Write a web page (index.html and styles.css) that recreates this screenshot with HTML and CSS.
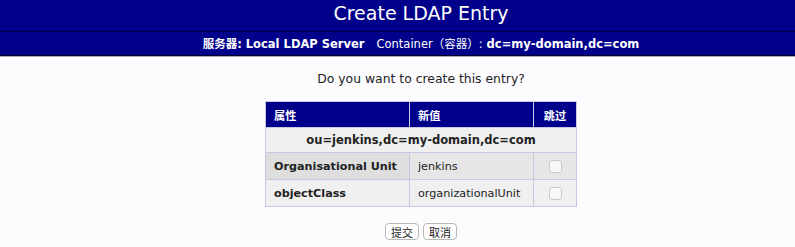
FILE: index.html
```html
<!DOCTYPE html>
<html lang="zh">

<head>
    <meta charset="UTF-8">
    <title>Create LDAP Entry</title>
    <link rel="stylesheet" href="styles.css">
</head>

<body>
    <h1 class="title">Create LDAP Entry</h1>
    <h2 class="subtitle">服务器: <b>Local LDAP Server</b>&nbsp;&nbsp;&nbsp;<span class="plain">Container（容器）:</span> <b>dc=my-domain,dc=com</b></h2>

    <div class="content">
        <p class="question">Do you want to create this entry?</p>

        <table class="confirm">
            <tr class="head">
                <th class="c-attr">属性</th>
                <th class="c-val">新值</th>
                <th class="c-skip">跳过</th>
            </tr>
            <tr class="dn">
                <td colspan="3">ou=jenkins,dc=my-domain,dc=com</td>
            </tr>
            <tr class="row even">
                <td class="attr">Organisational Unit</td>
                <td class="val">jenkins</td>
                <td class="skip"><span class="check"></span></td>
            </tr>
            <tr class="row odd">
                <td class="attr">objectClass</td>
                <td class="val">organizationalUnit</td>
                <td class="skip"><span class="check"></span></td>
            </tr>
        </table>

        <form class="actions">
            <button type="button" class="btn">提交</button>
            <button type="button" class="btn">取消</button>
        </form>
    </div>
</body>
</html>
```

FILE: styles.css
```css
body {
    margin: 0;
    padding: 0;
    background-color: #fcfcff;
    font-family: "DejaVu Sans", Verdana, "Noto Sans CJK SC", sans-serif;
    color: #222;
}

.title,
.subtitle,
.content {
    padding-left: 47px;
}

.title {
    margin: 0;
    height: 31px;
    line-height: 26px;
    background-color: #00008b;
    color: #ffffff;
    text-align: center;
    font-size: 19px;
    font-weight: normal;
    border-bottom: 1px solid #000040;
}

.subtitle {
    margin: 0;
    height: 23px;
    line-height: 24px;
    background-color: #00008b;
    color: #ffffff;
    text-align: center;
    font-size: 11.5px;
    font-weight: bold;
    border-bottom: 1px solid #000030;
    box-shadow: 0 1px 0 #a8a8b8;
}

.subtitle .plain {
    font-weight: normal;
}

.content {
    display: flex;
    flex-direction: column;
    align-items: center;
}

.question {
    margin: 15px 0 0 0;
    height: 16px;
    line-height: 16px;
    font-size: 12.4px;
}

.confirm {
    margin-top: 14px;
    border-collapse: collapse;
    border: 1px solid #c8c8e4;
    font-size: 11.2px;
}

.confirm th,
.confirm td {
    border: 1px solid #c8c8e4;
    padding: 0 8px;
}

.head th {
    height: 25px;
    background-color: #00008b;
    color: #ffffff;
    text-align: left;
    font-weight: bold;
}

.head .c-attr {
    width: 127px;
}

.head .c-val {
    width: 107px;
}

.head .c-skip {
    width: 26px;
    text-align: center;
}

.dn td {
    height: 24px;
    background-color: #f0f0f0;
    text-align: center;
    font-weight: bold;
    font-size: 11.5px;
}

.row td {
    height: 26px;
}

.row .attr {
    font-weight: bold;
}

.even .attr {
    background-color: #dedede;
}

.even .val,
.even .skip {
    background-color: #e6e6e6;
}

.odd td {
    background-color: #f0f0f0;
}

.skip {
    text-align: center;
}

.check {
    display: inline-block;
    width: 11px;
    height: 11px;
    border: 1px solid #c8c8c8;
    border-radius: 3px;
    background-color: #f8f8f8;
    vertical-align: middle;
}

.actions {
    display: flex;
    gap: 4px;
    margin-top: 16px;
}

.btn {
    font-family: "Noto Sans CJK SC", sans-serif;
    font-size: 11px;
    height: 17px;
    line-height: 14px;
    padding: 0 5px;
    background-color: #ffffff;
    border: 1px solid #b8b8b8;
    border-radius: 4px;
    color: #222;
}
```
